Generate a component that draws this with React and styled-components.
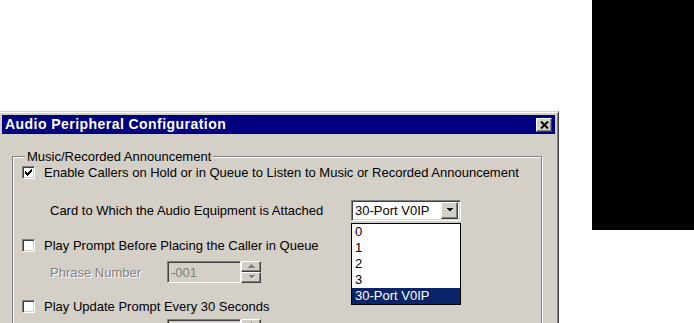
import React from 'react';
import styled, { createGlobalStyle } from 'styled-components';

const GlobalStyle = createGlobalStyle`
body {
    margin: 0;
    background: #fff;
    font-family: 'Liberation Sans', Arial, sans-serif;
}
`;

const Page = styled.div`
display: flex;
align-items: flex-start;
width: 694px;
height: 323px;
overflow: hidden;
background: #fff;
`;

const Dialog = styled.div`
flex: none;
margin: 111px 0 0 -2px;
width: 561px;
height: 240px;
box-sizing: border-box;
padding: 3px;
background: #d4d0c8;
border: 1px solid;
border-color: #d4d0c8 #404040 #404040 #d4d0c8;
box-shadow: inset 1px 1px #fff, inset -1px -1px #808080;
`;

const BlackBlock = styled.div`
flex: none;
margin-left: auto;
width: 102px;
height: 230px;
background: #000;
`;

const TitleBar = styled.div`
display: flex;
align-items: center;
justify-content: space-between;
height: 19px;
padding: 0 3px;
background: #000080;
`;

const TitleText = styled.span`
color: #fff;
font-weight: bold;
font-size: 14px;
letter-spacing: 0.45px;
line-height: 19px;
`;

const RaisedButton = styled.div`
display: flex;
align-items: center;
justify-content: center;
box-sizing: border-box;
width: ${p => p.$w}px;
height: ${p => p.$h}px;
background: #d4d0c8;
border: 1px solid;
border-color: #fff #404040 #404040 #fff;
box-shadow: inset -1px -1px #808080;
`;

const CloseButton = styled(RaisedButton)`
margin-top: 1px;
`;

const Body = styled.div`
padding: 22px 0 0 10px;
`;

const GroupBox = styled.div`
display: flex;
flex-direction: column;
box-sizing: border-box;
width: 530px;
height: 200px;
padding-left: 9px;
border: 1px solid #808080;
box-shadow: 1px 1px 0 #fff, inset 1px 1px 0 #fff;
font-size: 13px;
color: #000;
`;

const Legend = styled.div`
align-self: flex-start;
margin: -8px 0 0 3px;
padding: 0 2px;
height: 15px;
line-height: 15px;
background: #d4d0c8;
`;

const CheckRow = styled.div`
display: flex;
align-items: center;
gap: 9px;
height: 15px;
margin-top: ${p => p.$mt}px;
line-height: 15px;
`;

const CheckBox = styled.div`
display: flex;
align-items: center;
justify-content: center;
flex: none;
box-sizing: border-box;
width: 13px;
height: 13px;
background: #fff;
border: 1px solid;
border-color: #808080 #fff #fff #808080;
box-shadow: inset 1px 1px #404040, inset -1px -1px #d4d0c8;
`;

const FieldRow = styled.div`
display: grid;
grid-template-columns: ${p => p.$labelWidth}px auto;
align-items: center;
margin-top: ${p => p.$mt}px;
`;

const FieldLabel = styled.span`
padding-left: 28px;
line-height: 15px;
color: ${p => (p.$disabled ? '#808080' : '#000')};
text-shadow: ${p => (p.$disabled ? '1px 1px 0 #fff' : 'none')};
`;

const Combo = styled.div`
position: relative;
display: flex;
align-items: center;
justify-content: space-between;
box-sizing: border-box;
width: 110px;
height: 21px;
background: #fff;
border: 1px solid;
border-color: #808080 #fff #fff #808080;
box-shadow: inset 1px 1px #404040, inset -1px -1px #d4d0c8;
padding: 2px 2px 2px 3px;
`;

const ComboText = styled.span`
line-height: 15px;
`;

const DropList = styled.ul`
position: absolute;
top: 22px;
left: -1px;
z-index: 2;
box-sizing: border-box;
width: 110px;
margin: 0;
padding: 0;
list-style: none;
background: #fff;
border: 1px solid #000;
`;

const DropItem = styled.li`
height: 16px;
line-height: 16px;
padding-left: 3px;
background: ${p => (p.$selected ? '#0a246a' : '#fff')};
color: ${p => (p.$selected ? '#fff' : '#000')};
`;

const SpinField = styled.div`
display: flex;
align-items: center;
`;

const Edit = styled.div`
box-sizing: border-box;
width: 74px;
height: 22px;
padding: 3px 0 0 3px;
line-height: 15px;
color: #808080;
background: #d4d0c8;
border: 1px solid;
border-color: #808080 #fff #fff #808080;
box-shadow: inset 1px 1px #404040, inset -1px -1px #d4d0c8;
`;

const SpinButtons = styled.div`
display: flex;
flex-direction: column;
`;

const Arrow = ({ up, color = '#000', shadow }) => (
    <svg width="7" height="5" viewBox="0 0 7 5" shapeRendering="crispEdges">
        {shadow && (
            <polygon
                points={up ? '1,4 4,1 7,4' : '1,1 7,1 4,4'}
                fill="#fff"
            />
        )}
        <polygon points={up ? '0,3.5 3.5,0 7,3.5' : '0,0 7,0 3.5,3.5'} fill={color} />
    </svg>
);

const Spinner = ({ value }) => (
    <SpinField>
        <Edit>{value}</Edit>
        <SpinButtons>
            <RaisedButton $w={20} $h={11}>
                <Arrow up color="#808080" shadow />
            </RaisedButton>
            <RaisedButton $w={20} $h={11}>
                <Arrow color="#808080" shadow />
            </RaisedButton>
        </SpinButtons>
    </SpinField>
);

const Check = () => (
    <svg width="7" height="7" viewBox="0 0 7 7" shapeRendering="crispEdges">
        <polygon points="0,2 2,4 6,0 7,0 7,3 2,7 0,5" fill="#000" />
    </svg>
);

const CloseGlyph = () => (
    <svg width="9" height="8" viewBox="0 0 9 8">
        <path d="M1 0.5 L8 7.5 M8 0.5 L1 7.5" stroke="#000" strokeWidth="2" />
    </svg>
);

const items = ['0', '1', '2', '3', '30-Port V0IP'];

const App = () => (
    <>
        <GlobalStyle />
        <Page>
            <Dialog>
                <TitleBar>
                    <TitleText>Audio Peripheral Configuration</TitleText>
                    <CloseButton $w={16} $h={14}>
                        <CloseGlyph />
                    </CloseButton>
                </TitleBar>
                <Body>
                    <GroupBox>
                        <Legend>Music/Recorded Announcement</Legend>

                        <CheckRow $mt={1}>
                            <CheckBox><Check /></CheckBox>
                            Enable Callers on Hold or in Queue to Listen to Music or Recorded Announcement
                        </CheckRow>

                        <FieldRow $mt={20} $labelWidth={329}>
                            <FieldLabel>Card to Which the Audio Equipment is Attached</FieldLabel>
                            <Combo>
                                <ComboText>30-Port V0IP</ComboText>
                                <RaisedButton $w={17} $h={17}>
                                    <Arrow />
                                </RaisedButton>
                                <DropList>
                                    {items.map(item => (
                                        <DropItem key={item} $selected={item === '30-Port V0IP'}>{item}</DropItem>
                                    ))}
                                </DropList>
                            </Combo>
                        </FieldRow>

                        <CheckRow $mt={17}>
                            <CheckBox />
                            Play Prompt Before Placing the Caller in Queue
                        </CheckRow>

                        <FieldRow $mt={8} $labelWidth={145}>
                            <FieldLabel $disabled>Phrase Number</FieldLabel>
                            <Spinner value="-001" />
                        </FieldRow>

                        <CheckRow $mt={16}>
                            <CheckBox />
                            Play Update Prompt Every 30 Seconds
                        </CheckRow>

                        <FieldRow $mt={5} $labelWidth={145}>
                            <FieldLabel $disabled />
                            <Spinner value="" />
                        </FieldRow>
                    </GroupBox>
                </Body>
            </Dialog>
            <BlackBlock />
        </Page>
    </>
);

export default App;
